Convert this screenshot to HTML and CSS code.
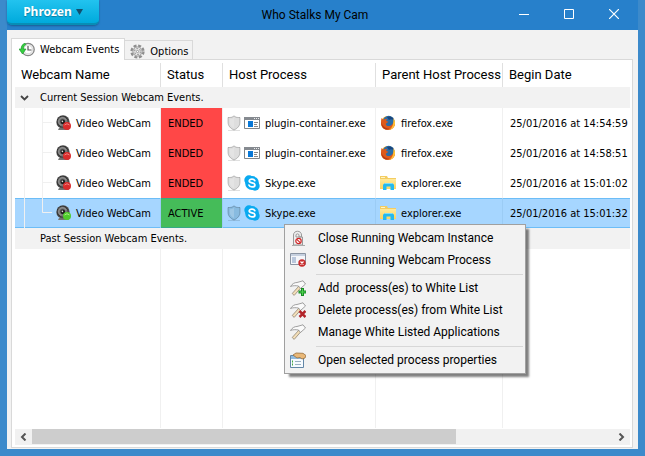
FILE: index.html
```
<!DOCTYPE html>
<html lang="en">
<head>
<meta charset="utf-8">
<title>Who Stalks My Cam</title>
<link rel="stylesheet" href="styles.css">
</head>
<body>
<svg class="defs" aria-hidden="true">
  <defs>
    <radialGradient id="lens" cx=".45" cy=".45" r=".55"><stop offset="0" stop-color="#eee"/><stop offset=".2" stop-color="#444"/><stop offset=".5" stop-color="#888"/><stop offset=".7" stop-color="#333"/><stop offset="1" stop-color="#666"/></radialGradient>
    <linearGradient id="folder" x1="0" y1="0" x2="0" y2="1"><stop offset="0" stop-color="#ffe99a"/><stop offset="1" stop-color="#fbd55f"/></linearGradient>
  </defs>
  <symbol id="cam" viewBox="0 0 16 16"><path d="M3 13h9l1 2H2z" fill="#777"/><circle cx="7" cy="7" r="6.7" fill="url(#lens)"/><circle cx="7" cy="7" r="4.2" fill="none" stroke="#999" stroke-width=".7"/><circle cx="7" cy="7" r="2.2" fill="#1c1c1c"/><circle cx="6.4" cy="6.4" r=".8" fill="#ddd"/></symbol>
  <symbol id="shield" viewBox="0 0 14 16"><path d="M7 .8C5.500 2.300 3.500 2.700 1 2.500V7c0 4 2.500 6.500 6 8 3.500-1.500 6-4 6-8V2.500C10.500 2.700 8.500 2.300 7 .8z" fill="currentColor" stroke="#000" stroke-opacity=".22"/><path d="M7 3C5.600 4 4.200 4.200 2.800 4.200V7c0 3 1.700 4.800 4.200 6z" fill="#fff" opacity=".2"/><path d="M1 15.500h12" stroke="#000" stroke-opacity=".12"/></symbol>
  <symbol id="app" viewBox="0 0 16 12"><path d="M.5.5h15v11H.5z" fill="#fff" stroke="#818589"/><path d="M0 0h16v3H0z" fill="#858a90"/><path d="M10 1h1v1h-1zM12 1h1v1h-1zM14 1h1v1h-1z" fill="#eee"/><path d="M4 4h5v6H4z" fill="#0878d7"/><path d="M10 5.500h4M10 7.500h3M10 9.500h4" stroke="#888"/></symbol>
  <symbol id="skype" viewBox="0 0 16 16"><circle cx="5" cy="5" r="4.700" fill="#0aaaf0"/><circle cx="11" cy="11" r="4.700" fill="#0aaaf0"/><circle cx="8" cy="8" r="6.900" fill="#0aaaf0"/><path d="M10.800 5.700C10.300 4.700 9.300 4.200 8 4.200c-1.700 0-2.800.8-2.800 1.900C5.200 8.600 11 7.300 11 9.900c0 1.200-1.200 2-3 2-1.500 0-2.700-.6-3.100-1.800" fill="none" stroke="#fff" stroke-width="1.700" stroke-linecap="round"/></symbol>
  <symbol id="firefox" viewBox="0 0 16 16"><circle cx="8" cy="8" r="7" fill="#f5a623"/><circle cx="8.700" cy="6.600" r="5.800" fill="#2b6da8"/><path d="M7 2c3-1.500 6 .2 7 3-2-1-4-1-5 0z" fill="#18457e"/><path d="M1.500 3 3.500 5C4.500 3.800 5.800 3.700 7 4.300L6 6l2.500.8-2.700 2c.2 1.800 1.700 2.600 3.700 2.200 2.200-.4 3.500-2 4-4.500L15 8c0 4-3 7-7 7s-7-3-7-7c0-2 .2-3.500.5-5z" fill="#df591b"/><path d="M13.300 3.500C14.800 5 15.300 7 15 9c-.5 3-3 5.500-6 6 3-2 4.800-5 4.300-11.500z" fill="#ffc233"/><path d="M1.300 7c1 4 4 6.600 8 6.500-3 2.300-8 .5-8-6.500z" fill="#b93a14"/></symbol>
  <symbol id="explorer" viewBox="0 0 16 16"><path d="M0 1h7l1 2h8v11H0z" fill="#f3cd62"/><path d="M1 2h4v1H1z" fill="#fff4c5"/><path d="M0 4h16v10H0z" fill="url(#folder)"/><path d="M3 15V9.700L5 8h7l2 1.700V15h-3.500v-3.500h-4V15z" fill="#25b9ed"/><path d="M5 8h7l1.200 1H3.800z" fill="#7ddcf8"/></symbol>
  <symbol id="hammer" viewBox="0 0 16 16"><path d="m9 6-6.800 7.500 2 1.900L11.500 7z" fill="#f4dfb8" stroke="#8f8575" stroke-width=".8"/><path d="M.5 6.500C2.500 3.500 4.500 2.500 7 2.500L13 .8 15.500 4l-5 4.500L8.500 6C5.500 5.500 3 5.500.5 6.500z" fill="#fafafa" stroke="#8a8a8a" stroke-width=".8"/></symbol>
  <symbol id="stop" viewBox="0 0 8 8"><circle cx="4" cy="4" r="3.700" fill="#c92d2d"/><path d="m2.500 2.500 3 3m0-3-3 3" stroke="#fff" stroke-width="1.200"/></symbol>
</svg>

<main class="window">
  <header class="titlebar">
    <button class="brand" type="button">Phrozen <svg width="7" height="6" viewBox="0 0 7 6"><path d="M0 0h7L3.500 6z" fill="#12506f"/></svg></button>
    <h1>Who Stalks My Cam</h1>
    <div class="controls">
      <button type="button" aria-label="Minimize"><svg width="10" height="10"><path d="M0 5.500h10" stroke="#fff"/></svg></button>
      <button type="button" aria-label="Maximize"><svg width="10" height="10"><path d="M.5.5h9v9h-9z" fill="none" stroke="#fff"/></svg></button>
      <button type="button" aria-label="Close"><svg width="10" height="10"><path d="m0 0 10 10M10 0 0 10" stroke="#fff" stroke-width="1.200"/></svg></button>
    </div>
  </header>

  <div class="client">
    <div class="tabs" role="tablist">
      <button class="tab active" role="tab" aria-selected="true" type="button">
        <svg width="16" height="16" viewBox="0 0 16 16"><circle cx="9" cy="7.500" r="6.200" fill="#f4f4f4" stroke="#858585" stroke-width="1.300"/><circle cx="9" cy="7.500" r="4.400" fill="#fff" stroke="#ccc" stroke-width=".8"/><path d="M9 4v4h3.500" fill="none" stroke="#555" stroke-width="1.200"/><path d="M6 1.300C3.500 2 2 4 2.200 7H0l3.500 5L7 7H4.500C4.500 5 5 3.500 7 2.500z" fill="#36cf3f" stroke="#16942a" stroke-width=".6"/></svg>
        Webcam Events
      </button>
      <button class="tab" role="tab" aria-selected="false" type="button">
        <svg width="15" height="15" viewBox="0 0 16 16"><circle cx="8" cy="8" r="6.400" fill="none" stroke="#8e8e8e" stroke-width="2.400" stroke-dasharray="3.200 1.820"/><circle cx="8" cy="8" r="4.900" fill="#e6e6e6" stroke="#929292" stroke-width="1"/><circle cx="8" cy="8" r="3.200" fill="none" stroke="#a2a2a2" stroke-width="1.300" stroke-dasharray="2 1.350"/><circle cx="8" cy="8" r="1.200" fill="#fff" stroke="#777" stroke-width=".7"/></svg>
        Options
      </button>
    </div>

    <section class="panel">
      <table class="events">
        <colgroup><col class="c-name"><col class="c-status"><col class="c-host"><col class="c-parent"><col></colgroup>
        <thead><tr><th>Webcam Name</th><th>Status</th><th>Host Process</th><th>Parent Host Process</th><th>Begin Date</th></tr></thead>
        <tbody>
          <tr class="group"><td colspan="5"><div class="group-label"><button class="toggle" type="button" aria-label="Collapse"><svg width="9" height="6"><path d="m1 1 3.500 3.500L8 1" fill="none" stroke="#444" stroke-width="1.800"/></svg></button>Current Session Webcam Events.</div></td></tr>
          <tr class="event">
            <td><div class="cell name"><svg class="tree" width="37" height="30"><path d="M9.500 0v30M27.500 0v30M28 14.500h9"/></svg><svg width="16" height="16"><use href="#cam"/><circle cx="11" cy="11" r="4" fill="#d92c2c"/><path d="M8.500 10q2.500-2.500 5 0" stroke="#f08080" fill="none"/></svg>Video WebCam</div></td>
            <td class="ended">ENDED</td>
            <td><div class="cell host"><svg class="shield" width="14" height="16"><use href="#shield"/></svg><svg width="16" height="12"><use href="#app"/></svg>plugin-container.exe</div></td>
            <td><div class="cell parent"><svg width="16" height="16"><use href="#firefox"/></svg>firefox.exe</div></td>
            <td>25/01/2016 at 14:54:59</td>
          </tr>
          <tr class="event">
            <td><div class="cell name"><svg class="tree" width="37" height="30"><path d="M9.500 0v30M27.500 0v30M28 14.500h9"/></svg><svg width="16" height="16"><use href="#cam"/><circle cx="11" cy="11" r="4" fill="#d92c2c"/><path d="M8.500 10q2.500-2.500 5 0" stroke="#f08080" fill="none"/></svg>Video WebCam</div></td>
            <td class="ended">ENDED</td>
            <td><div class="cell host"><svg class="shield" width="14" height="16"><use href="#shield"/></svg><svg width="16" height="12"><use href="#app"/></svg>plugin-container.exe</div></td>
            <td><div class="cell parent"><svg width="16" height="16"><use href="#firefox"/></svg>firefox.exe</div></td>
            <td>25/01/2016 at 14:58:51</td>
          </tr>
          <tr class="event">
            <td><div class="cell name"><svg class="tree" width="37" height="30"><path d="M9.500 0v30M27.500 0v30M28 14.500h9"/></svg><svg width="16" height="16"><use href="#cam"/><circle cx="11" cy="11" r="4" fill="#d92c2c"/><path d="M8.500 10q2.500-2.500 5 0" stroke="#f08080" fill="none"/></svg>Video WebCam</div></td>
            <td class="ended">ENDED</td>
            <td><div class="cell host"><svg class="shield" width="14" height="16"><use href="#shield"/></svg><svg width="16" height="16"><use href="#skype"/></svg>Skype.exe</div></td>
            <td><div class="cell parent"><svg width="16" height="16"><use href="#explorer"/></svg>explorer.exe</div></td>
            <td>25/01/2016 at 15:01:02</td>
          </tr>
          <tr class="event selected">
            <td><div class="cell name"><svg class="tree" width="37" height="30"><path d="M9.500 0v30M27.500 0v14.500h9.500"/></svg><svg width="16" height="16"><use href="#cam"/><circle cx="11" cy="11" r="4" fill="#4fcb2c"/><path d="M8.500 10q2.500-2.500 5 0" stroke="#a5ee80" fill="none"/></svg>Video WebCam</div></td>
            <td class="live">ACTIVE</td>
            <td><div class="cell host"><svg class="shield" width="14" height="16"><use href="#shield"/></svg><svg width="16" height="16"><use href="#skype"/></svg>Skype.exe</div></td>
            <td><div class="cell parent"><svg width="16" height="16"><use href="#explorer"/></svg>explorer.exe</div></td>
            <td>25/01/2016 at 15:01:32</td>
          </tr>
          <tr class="group"><td colspan="5"><div class="group-label past">Past Session Webcam Events.</div></td></tr>
          <tr class="filler"><td></td><td></td><td></td><td></td><td></td></tr>
        </tbody>
      </table>

      <div class="scrollbar">
        <button type="button" aria-label="Scroll left"><svg width="7" height="8"><path d="M5.500.5 2 4l3.500 3.500" fill="none" stroke="#555" stroke-width="2"/></svg></button>
        <div class="track"><div class="thumb"></div></div>
        <button type="button" aria-label="Scroll right"><svg width="7" height="8"><path d="M1.500.5 5 4 1.500 7.500" fill="none" stroke="#555" stroke-width="2"/></svg></button>
      </div>
    </section>
  </div>

  <div class="menu" role="menu">
    <button role="menuitem" type="button"><svg width="16" height="16"><path d="M3.500 15V5c0-5 8-5 8 0v2H9V5c0-1.500-3-1.500-3 0v2h6.500v8z" fill="#eee" stroke="#999"/><circle cx="8.500" cy="11" r="2.700" fill="#fff" stroke="#cf2828" stroke-width="1.200"/><path d="m6.800 9.300 3.400 3.400" stroke="#cf2828" stroke-width="1.200"/><path d="M2 15.500h13" stroke="#aaa"/></svg>Close Running Webcam Instance</button>
    <button role="menuitem" type="button"><svg width="16" height="16"><path d="M.5 1.500h15v11H.5z" fill="#f4f6fa" stroke="#8a94a2"/><path d="M1 2h14v2H1z" fill="#c6d0df"/><path d="M2 5h4v6H2z" fill="#b9c7dc"/><use href="#stop" x="8" y="7" width="8" height="8"/></svg>Close Running Webcam Process</button>
    <hr>
    <button role="menuitem" type="button"><svg width="16" height="16"><use href="#hammer"/><path d="M11 8h3v2.500h2v3h-2V16h-3v-2.500H8.500v-3H11z" fill="#188c24"/><path d="M12.500 9v6M9.500 12h6" stroke="#4ed34e"/></svg>Add&nbsp; process(es) to White List</button>
    <button role="menuitem" type="button"><svg width="16" height="16"><use href="#hammer"/><path d="m9.500 9 6 6m0-6-6 6" stroke="#b3252b" stroke-width="2.500"/></svg>Delete process(es) from White List</button>
    <button role="menuitem" type="button"><svg width="16" height="16"><use href="#hammer"/></svg>Manage White Listed Applications</button>
    <hr>
    <button role="menuitem" type="button"><svg width="16" height="16"><path d="M.5 3.500h13v12H.5z" fill="#f7fbff" stroke="#6287a7"/><path d="M1 4h12v3H1z" fill="#8fbbe0"/><path d="M2 9.500h1M2 12.500h1" stroke="#45a843" stroke-width="2"/><path d="M5 9.500h6M5 12.500h6" stroke="#9ab0c2"/><path d="m3 3 3-2 7 .3 3 2.200-1 2.500-3 1-2-1.500L7 6 5 4.500z" fill="#e9b878" stroke="#98703f" stroke-width=".8"/></svg>Open selected process properties</button>
  </div>
</main>
</body>
</html>
```
FILE: styles.css
```
* { box-sizing: border-box; }

body {
  margin: 0;
  background: #3c8acb;
  color: #000;
  font: 11px/15px "DejaVu Sans Condensed", "Noto Sans", sans-serif;
}

button {
  margin: 0;
  padding: 0;
  border: 0;
  background: none;
  color: inherit;
  font: inherit;
}

svg { display: block; flex: none; }
.defs { position: absolute; width: 0; height: 0; }

.window {
  position: relative;
  display: flex;
  flex-direction: column;
  min-height: 100vh;
  padding: 0 7px 7px;
}

/* Title bar */
.titlebar {
  display: grid;
  grid-template-columns: 1fr auto 1fr;
  height: 30px;
  background: #2780cb;
}

.brand {
  display: flex;
  align-items: center;
  justify-content: center;
  gap: 4px;
  width: 92px;
  height: 25px;
  border-bottom: 2px solid #078eb5;
  border-radius: 0 0 5px 5px;
  background: linear-gradient(#22c3ef, #00aadc);
  box-shadow: 0 1px 2px #1a5c94;
  color: #fff;
  font: bold 12px/16px "Noto Sans", sans-serif;
  text-shadow: 0 1px 1px #0a7ca0;
}

h1 {
  margin: 0;
  padding-right: 15px;
  font: 12px/30px Roboto, sans-serif;
}

.controls { display: flex; justify-content: flex-end; padding-right: 2px; }
.controls button {
  display: grid;
  place-items: center;
  width: 45px;
  height: 28px;
}

/* Tabs and panel */
.client {
  flex: 1;
  display: flex;
  flex-direction: column;
  padding: 8px 5px 1px 4px;
  background: #f2f2f2;
}

.tabs { display: flex; align-items: flex-end; }

.tab {
  display: flex;
  align-items: center;
  gap: 5px;
  height: 19px;
  padding: 2px 3px 0 5px;
  border: 1px solid #d9d9d9;
  border-width: 1px 1px 0 0;
}

.tab.active {
  z-index: 1;
  height: 22px;
  margin-bottom: -1px;
  padding: 0 5px 0 7px;
  border-left-width: 1px;
  background: #fff;
}

.panel {
  flex: 1;
  display: flex;
  flex-direction: column;
  padding: 3px 2px 2px 3px;
  border: 1px solid #d9d9d9;
  background: #fff;
}

/* Event table */
.events {
  flex: 1;
  width: 100%;
  table-layout: fixed;
  border-spacing: 0;
}

.c-name { width: 146px; }
.c-status { width: 62px; }
.c-host { width: 153px; }
.c-parent { width: 127px; }

th, td {
  padding: 0 0 0 7px;
  border-right: 1px solid #f0f0f0;
  text-align: left;
  white-space: nowrap;
}

th {
  height: 24px;
  padding-left: 6px;
  border-color: #e0e0e0;
  font: 13px/16px Roboto, sans-serif;
}

th:last-child, td:last-child { border-right: 0; }

.group td {
  height: 21px;
  padding: 0;
  background: #f2f2f2;
}

.group-label { display: flex; align-items: center; padding-left: 5px; }
.group-label.past { padding-left: 25px; }
.toggle { width: 20px; }

.event td { height: 30px; }
.event td:first-child { padding-left: 0; }
.event td:nth-child(3), .event td:nth-child(4) { padding-left: 4px; }

.cell { display: flex; align-items: center; }
.name { gap: 4px; }
.name, .tree { height: 30px; }
.tree { fill: none; stroke: #f0f0f0; }
.host { gap: 3px; }
.host svg + svg { margin-right: 2px; }
.parent { gap: 5px; }
.shield { color: #dedede; }

.event .ended { border-color: #f0f0f0; background: #ff4747; background-clip: padding-box; }

.selected td {
  background: #a6d6ff;
  border-right-color: #9bccf5;
  box-shadow: inset 0 1px #6cbdf7, inset 0 -1px #6cbdf7;
}
.selected .shield { color: #88bbe0; }
.selected .live { background: #45bc59; background-clip: padding-box; box-shadow: inset 0 1px #35a987, inset 0 -1px #35a987; }

.filler td { height: auto; }

/* Horizontal scroll bar */
.scrollbar {
  display: flex;
  height: 16px;
  margin-top: 1px;
  background: #f1f1f1;
}
.scrollbar button {
  display: grid;
  place-items: center;
  width: 17px;
}
.track { flex: 1; }
.thumb { width: 73%; height: 15px; background: #cdcdcd; }

/* Context menu */
.menu {
  position: absolute;
  top: 224px;
  left: 284px;
  width: 242px;
  padding: 2px;
  border: 1px solid #a0a0a0;
  background: #f2f2f2;
  box-shadow: 4px 4px 2px -1px rgba(0, 0, 0, 0.5);
  font: 12px/16px Roboto, sans-serif;
}

.menu button {
  display: flex;
  align-items: center;
  gap: 12px;
  width: 100%;
  height: 22px;
  padding-left: 3px;
  white-space: nowrap;
}

.menu hr {
  height: 1px;
  margin: 3px 0 2px 29px;
  border: 0;
  background: #d7d7d7;
}
```
